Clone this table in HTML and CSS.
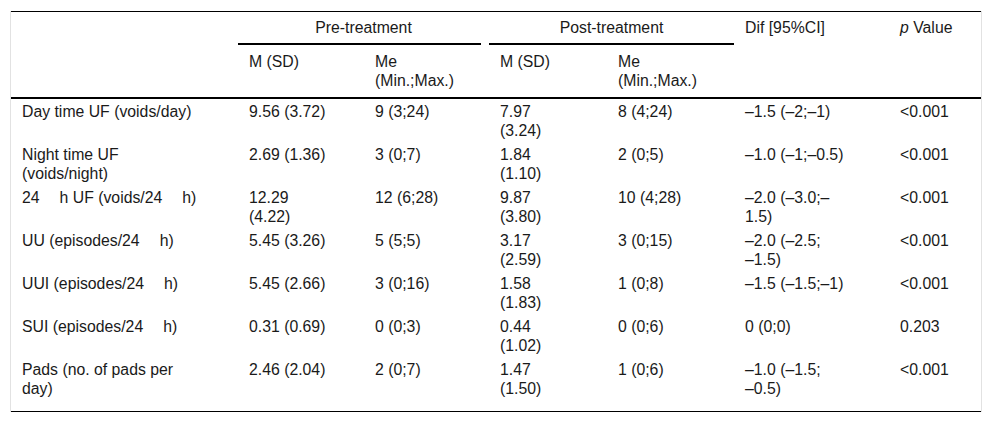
FILE: index.html
```html
<!DOCTYPE html>
<html lang="en">
<head>
<meta charset="utf-8">
<title>Voiding diary outcomes</title>
<link rel="stylesheet" href="styles.css">
</head>
<body>
<div class="table-wrap">
  <table class="data">
    <colgroup>
      <col class="c-label">
      <col class="c-pre-m">
      <col class="c-pre-me">
      <col class="c-post-m">
      <col class="c-post-me">
      <col class="c-dif">
      <col class="c-p">
    </colgroup>
    <thead>
      <tr class="head-top">
        <th rowspan="2"></th>
        <th colspan="2" class="grp grp-pre"><div class="grp-label">Pre-treatment</div></th>
        <th colspan="2" class="grp"><div class="grp-label">Post-treatment</div></th>
        <th rowspan="2" class="head-single">Dif [95%CI]</th>
        <th rowspan="2" class="head-single"><i>p</i> Value</th>
      </tr>
      <tr class="head-sub">
        <th>M (SD)</th>
        <th>Me (Min.;Max.)</th>
        <th>M (SD)</th>
        <th>Me (Min.;Max.)</th>
      </tr>
    </thead>
    <tbody>
      <tr>
        <td>Day time UF (voids/day)</td>
        <td>9.56 (3.72)</td>
        <td>9 (3;24)</td>
        <td>7.97 (3.24)</td>
        <td>8 (4;24)</td>
        <td>&ndash;1.5 (&ndash;2;&ndash;1)</td>
        <td>&lt;0.001</td>
      </tr>
      <tr>
        <td>Night time UF (voids/night)</td>
        <td>2.69 (1.36)</td>
        <td>3 (0;7)</td>
        <td>1.84 (1.10)</td>
        <td>2 (0;5)</td>
        <td>&ndash;1.0 (&ndash;1;&ndash;0.5)</td>
        <td>&lt;0.001</td>
      </tr>
      <tr>
        <td>24<span class="hgap"></span>h UF (voids/24<span class="hgap"></span>h)</td>
        <td>12.29 (4.22)</td>
        <td>12 (6;28)</td>
        <td>9.87 (3.80)</td>
        <td>10 (4;28)</td>
        <td>&ndash;2.0 (&ndash;3.0;&ndash;1.5)</td>
        <td>&lt;0.001</td>
      </tr>
      <tr>
        <td>UU (episodes/24<span class="hgap"></span>h)</td>
        <td>5.45 (3.26)</td>
        <td>5 (5;5)</td>
        <td>3.17 (2.59)</td>
        <td>3 (0;15)</td>
        <td>&ndash;2.0 (&ndash;2.5; &ndash;&#8288;1.5)</td>
        <td>&lt;0.001</td>
      </tr>
      <tr>
        <td>UUI (episodes/24<span class="hgap"></span>h)</td>
        <td>5.45 (2.66)</td>
        <td>3 (0;16)</td>
        <td>1.58 (1.83)</td>
        <td>1 (0;8)</td>
        <td>&ndash;1.5 (&ndash;1.5;&ndash;1)</td>
        <td>&lt;0.001</td>
      </tr>
      <tr>
        <td>SUI (episodes/24<span class="hgap"></span>h)</td>
        <td>0.31 (0.69)</td>
        <td>0 (0;3)</td>
        <td>0.44 (1.02)</td>
        <td>0 (0;6)</td>
        <td>0 (0;0)</td>
        <td>0.203</td>
      </tr>
      <tr>
        <td>Pads (no. of pads per day)</td>
        <td>2.46 (2.04)</td>
        <td>2 (0;7)</td>
        <td>1.47 (1.50)</td>
        <td>1 (0;6)</td>
        <td>&ndash;1.0 (&ndash;1.5; &ndash;&#8288;0.5)</td>
        <td>&lt;0.001</td>
      </tr>
    </tbody>
  </table>
</div>
</body>
</html>
```

FILE: styles.css
```css
html, body {
  margin: 0;
  padding: 0;
  background: #ffffff;
}

body {
  font-family: "Liberation Sans", Arial, Helvetica, sans-serif;
  color: #1a1a1a;
}

.table-wrap {
  margin: 11px 10px 0;
  border-left: 1px solid #e2e2e2;
  border-right: 1px solid #e2e2e2;
}

.data {
  width: 970px;
  table-layout: fixed;
  border-collapse: collapse;
  font-size: 15.8px;
  line-height: 19px;
  border-top: 1px solid #000;
  border-bottom: 1px solid #000;
}

.c-label { width: 227px; }
.c-pre-m { width: 126px; }
.c-pre-me { width: 125px; }
.c-post-m { width: 118px; }
.c-post-me { width: 127px; }
.c-dif { width: 155px; }
.c-p { width: 92px; }

.data th,
.data td {
  text-align: left;
  vertical-align: top;
  font-weight: normal;
  padding: 2.5px 36px 2.5px 11px;
}

.head-top th:last-child,
.data tbody td:last-child {
  padding-right: 8px;
}

.data thead {
  border-bottom: 2px solid #000;
}

.head-top th {
  padding-top: 6px;
  padding-bottom: 6px;
}

.data th.grp {
  padding: 0;
  text-align: center;
}

.grp-label {
  padding: 6px 11px;
  border-bottom: 2px solid #000;
}

.grp-pre .grp-label {
  margin-right: 8px;
  padding-left: 19px;
}

.head-sub th {
  padding-top: 7px;
  padding-bottom: 7px;
}

.data tbody tr:last-child td {
  padding-bottom: 13px;
}

.hgap {
  display: inline-block;
  width: 20px;
}
```
